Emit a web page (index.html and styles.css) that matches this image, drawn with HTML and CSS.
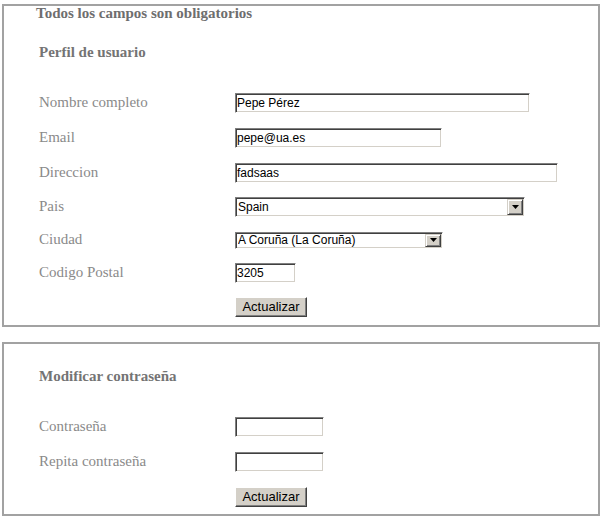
FILE: index.html
```html
<!DOCTYPE html>
<html lang="es">
<head>
<meta charset="utf-8">
<title>Perfil de usuario</title>
<link rel="stylesheet" href="styles.css">
</head>
<body>
<div class="page">
  <section class="panel panel-profile">
    <h2 class="notice">Todos los campos son obligatorios</h2>
    <h3 class="panel-title">Perfil de usuario</h3>
    <form class="form-grid form-grid-profile">
      <label class="field-label" for="nombre">Nombre completo</label>
      <div class="field"><input class="text-input w-nombre" id="nombre" type="text" value="Pepe Pérez"></div>

      <label class="field-label" for="email">Email</label>
      <div class="field"><input class="text-input w-email" id="email" type="text" value="pepe@ua.es"></div>

      <label class="field-label" for="direccion">Direccion</label>
      <div class="field"><input class="text-input w-direccion" id="direccion" type="text" value="fadsaas"></div>

      <label class="field-label" for="pais">Pais</label>
      <div class="field">
        <div class="select-wrap w-pais">
          <select class="select-input" id="pais"><option>Spain</option></select>
          <span class="select-arrow" aria-hidden="true"><svg width="7" height="4" viewBox="0 0 7 4"><path d="M0 0h7L3.5 4z" fill="#000"/></svg></span>
        </div>
      </div>

      <label class="field-label" for="ciudad">Ciudad</label>
      <div class="field">
        <div class="select-wrap w-ciudad">
          <select class="select-input select-short" id="ciudad"><option>A Coruña (La Coruña)</option></select>
          <span class="select-arrow" aria-hidden="true"><svg width="7" height="4" viewBox="0 0 7 4"><path d="M0 0h7L3.5 4z" fill="#000"/></svg></span>
        </div>
      </div>

      <label class="field-label" for="cp">Codigo Postal</label>
      <div class="field"><input class="text-input w-cp" id="cp" type="text" value="3205"></div>

      <span class="field-label"></span>
      <div class="field"><button class="btn" type="button">Actualizar</button></div>
    </form>
  </section>

  <section class="panel panel-password">
    <h3 class="panel-title">Modificar contraseña</h3>
    <form class="form-grid form-grid-pw">
      <label class="field-label" for="pw1">Contraseña</label>
      <div class="field"><input class="text-input w-pw" id="pw1" type="password"></div>

      <label class="field-label" for="pw2">Repita contraseña</label>
      <div class="field"><input class="text-input w-pw" id="pw2" type="password"></div>

      <span class="field-label"></span>
      <div class="field"><button class="btn" type="button">Actualizar</button></div>
    </form>
  </section>
</div>
</body>
</html>
```

FILE: styles.css
```css
html, body {
  margin: 0;
  padding: 0;
  background: #ffffff;
}

body {
  font-family: "Liberation Serif", "Times New Roman", serif;
  font-size: 15px;
  color: #888888;
}

.page {
  padding: 4px 0 0 2px;
}

.panel {
  box-sizing: border-box;
  width: 598px;
  border: 2px solid #a2a2a2;
  padding: 0 0 2px 35px;
}

.panel-password {
  margin-top: 15px;
  padding-bottom: 0;
}

.notice {
  margin: 0 0 0 -3px;
  font-size: 15px;
  line-height: 15px;
  font-weight: bold;
  color: #6e6e6e;
}

.panel-title {
  margin: 24px 0 0 0;
  font-size: 15px;
  line-height: 15px;
  font-weight: bold;
  color: #747474;
}

.panel-password .panel-title {
  margin-top: 25px;
}

.form-grid {
  margin: 25px 0 0 0;
  display: grid;
  grid-template-columns: 196px 1fr;
  align-items: center;
}

.form-grid-profile {
  grid-template-rows: 35px 35px 35px 34px 32px 34px 33px;
}

.form-grid-pw {
  grid-template-rows: 35px 35px 35px;
}

.field-label {
  font-size: 15px;
  line-height: 15px;
  color: #8a8a8a;
  padding-bottom: 1px;
}

.field {
  display: flex;
  align-items: center;
}

.text-input,
.select-input {
  box-sizing: border-box;
  height: 20px;
  margin: 0;
  padding: 0 1px;
  font-family: "Liberation Sans", Arial, sans-serif;
  font-size: 12px;
  color: #000000;
  background: #ffffff;
  border-style: solid;
  border-width: 1px;
  border-color: #808080 #ffffff #ffffff #808080;
  box-shadow: inset 1px 1px 0 #404040, inset -1px -1px 0 #d4d0c8;
  outline: none;
}

.w-nombre { width: 295px; }
.w-email { width: 207px; }
.w-direccion { width: 323px; }
.w-cp { width: 61px; }
.w-pw { width: 89px; }

.select-wrap {
  position: relative;
  display: inline-block;
}

.w-pais { width: 290px; }
.w-ciudad { width: 208px; }

.select-input {
  display: block;
  width: 100%;
  appearance: none;
  -webkit-appearance: none;
  padding: 0 18px 0 2px;
}

.select-short {
  height: 17px;
}

.select-arrow {
  position: absolute;
  top: 2px;
  right: 2px;
  bottom: 2px;
  width: 16px;
  box-sizing: border-box;
  background: #d4d0c8;
  border-style: solid;
  border-width: 1px;
  border-color: #d4d0c8 #404040 #404040 #d4d0c8;
  box-shadow: inset 1px 1px 0 #ffffff, inset -1px -1px 0 #808080;
  display: flex;
  align-items: center;
  justify-content: center;
}

.select-arrow svg {
  display: block;
}

.btn {
  box-sizing: border-box;
  width: 72px;
  height: 20px;
  margin: 0;
  padding: 0;
  font-family: "Liberation Sans", Arial, sans-serif;
  font-size: 13px;
  color: #000000;
  background: #d4d0c8;
  border-style: solid;
  border-width: 1px;
  border-color: #ffffff #404040 #404040 #ffffff;
  box-shadow: inset -1px -1px 0 #808080;
  cursor: default;
}
```
